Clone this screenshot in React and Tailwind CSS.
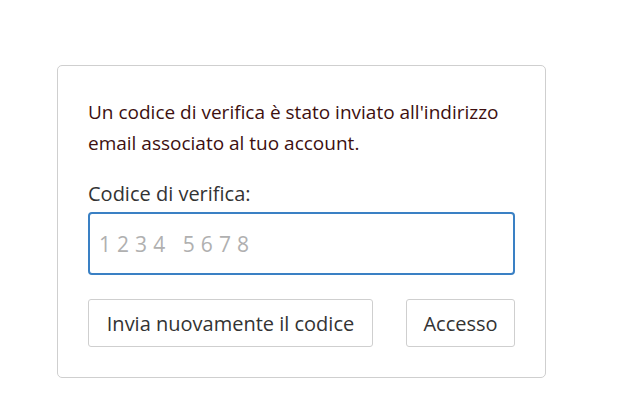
export default function App() {
  return (
    <div className="min-h-[400px] bg-white pt-[65px] pl-[57px]" style={{ fontFamily: '"Open Sans", "Noto Sans", sans-serif' }}>
      <div className="w-[489px] rounded-[5px] border border-[#cfcfcf] bg-white px-[30px] pt-[31px] pb-[30px]">
        <p className="text-[19px] leading-[31px] text-[#3d1010]">
          Un codice di verifica è stato inviato all'indirizzo email associato al tuo account.
        </p>
        <label className="mt-[19px] block text-[20px] leading-[31px] text-[#333]">Codice di verifica:</label>
        <input
          className="mt-[3px] block h-[63px] w-full rounded-[4px] border-2 border-[#3a80c4] px-[9px] text-[21px] tracking-[0.3px] text-[#333] outline-none placeholder:text-[#b0b0b0]"
          placeholder="1 2 3 4   5 6 7 8"
        />
        <div className="mt-[24px] flex justify-between">
          <button className="h-[48px] w-[285px] rounded-[3px] border border-[#cfcfcf] bg-white pt-[2px] text-[20px] text-[#333]">
            Invia nuovamente il codice
          </button>
          <button className="h-[48px] w-[109px] rounded-[3px] border border-[#cfcfcf] bg-white pt-[2px] text-[20px] text-[#333]">
            Accesso
          </button>
        </div>
      </div>
    </div>
  );
}
